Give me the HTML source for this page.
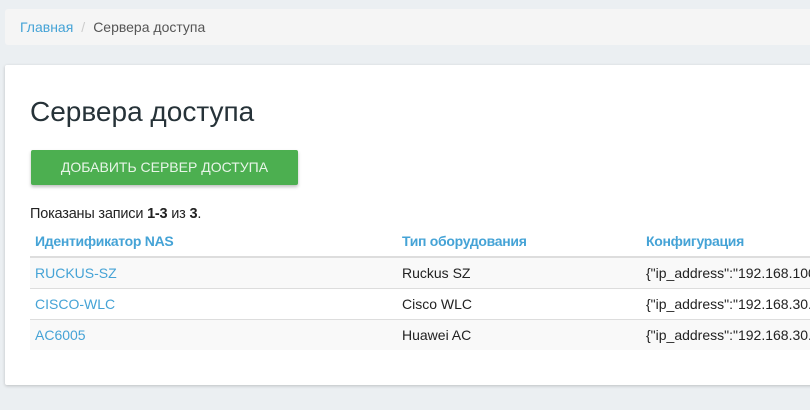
<!DOCTYPE html><html><head><style>
body{margin:0;width:810px;height:410px;background:#ebeff2;font-family:"Liberation Sans",sans-serif;overflow:hidden;position:relative}
.bc{position:absolute;left:5px;top:9px;width:820px;height:36px;background:#f5f5f5;border-radius:3px;font-size:14px;line-height:36px;color:#555}
.bc a{color:#45a3d6;margin-left:15px}
.bc .s{color:#ccc;margin:0 8px}
.card{position:absolute;left:5px;top:65px;width:830px;height:320px;background:#fff;border-radius:2px;box-shadow:0 1px 3px rgba(0,0,0,.2)}
h1{position:absolute;left:25px;top:31px;margin:0;font-weight:normal;font-size:28px;color:#263238}
.btn{position:absolute;left:26px;top:85px;width:267px;height:35px;background:#4caf50;font-size:14px;line-height:35px;text-align:center;border-radius:2px;box-shadow:0 2px 3px rgba(0,0,0,.25);color:#e8f5e8}
.sum{position:absolute;left:25px;top:141px;font-size:14.5px;color:#222;letter-spacing:-.2px}
table{position:absolute;left:25px;top:160px;width:820px;border-collapse:collapse;font-size:14px}
th{text-align:left;color:#45a3d6;font-weight:bold;height:31px;border-bottom:2px solid #ddd;padding:0 5px;letter-spacing:-.3px}
td{height:30px;border-bottom:1px solid #ddd;padding:0 5px;color:#222}
tr.o td{background:#f9f9f9}
td a{color:#45a3d6}
tr:last-child td{border-bottom:none}
</style></head><body>
<div class="bc"><a>Главная</a><span class="s">/</span>Сервера доступа</div>
<div class="card">
<h1>Сервера доступа</h1>
<div class="btn">ДОБАВИТЬ СЕРВЕР ДОСТУПА</div>
<div class="sum">Показаны записи <b>1-3</b> из <b>3</b>.</div>
<table><colgroup><col style="width:367px"><col style="width:244px"><col></colgroup>
<tr><th>Идентификатор NAS</th><th>Тип оборудования</th><th>Конфигурация</th></tr>
<tr class="o"><td><a>RUCKUS-SZ</a></td><td>Ruckus SZ</td><td>{"ip_address":"192.168.100.1"}</td></tr>
<tr><td><a>CISCO-WLC</a></td><td>Cisco WLC</td><td>{"ip_address":"192.168.30.1"}</td></tr>
<tr class="o"><td><a>AC6005</a></td><td>Huawei AC</td><td>{"ip_address":"192.168.30.2"}</td></tr>
</table></div>
</body></html>
